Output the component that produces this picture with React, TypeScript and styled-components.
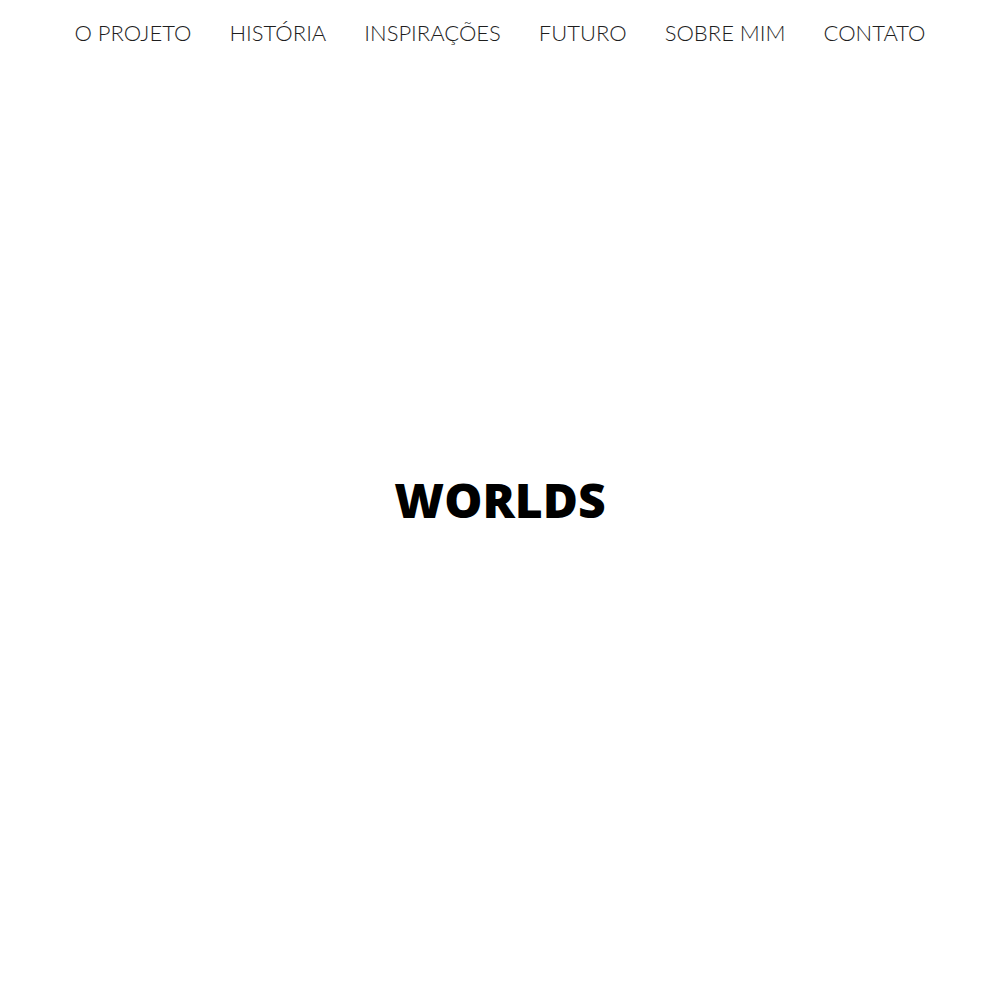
import React from "react";
import styled, { createGlobalStyle } from "styled-components";

const Global = createGlobalStyle`
  html, body { margin: 0; padding: 0; background: #fff; }
  body { font-family: "Lato", "Open Sans", sans-serif; }
`;

const Page = styled.div`
  width: 1000px;
  height: 1000px;
  display: flex;
  flex-direction: column;
  background: #ffffff;
`;

const Nav = styled.nav`
  height: 66px;
  display: flex;
  justify-content: center;
  align-items: center;
  gap: 38px;
`;

const NavLink = styled.a`
  font-family: "Lato", sans-serif;
  font-weight: 300;
  font-size: 22px;
  color: #1e1e1e;
  text-decoration: none;
  text-transform: uppercase;
  letter-spacing: 0;
  line-height: 1;
`;

const Hero = styled.main`
  flex: 1;
  display: flex;
  align-items: center;
  justify-content: center;
  padding-bottom: 66px;
`;

const Title = styled.h1`
  margin: 0;
  font-family: "Open Sans", sans-serif;
  font-weight: 800;
  font-size: 48px;
  letter-spacing: 0;
  color: #000;
  line-height: 1;
`;

const items = ["O Projeto", "História", "Inspirações", "Futuro", "Sobre mim", "Contato"];

export default function App() {
  return (
    <>
      <Global />
      <Page>
        <Nav>
          {items.map((t) => (
            <NavLink key={t} href="#">{t}</NavLink>
          ))}
        </Nav>
        <Hero>
          <Title>WORLDS</Title>
        </Hero>
      </Page>
    </>
  );
}
